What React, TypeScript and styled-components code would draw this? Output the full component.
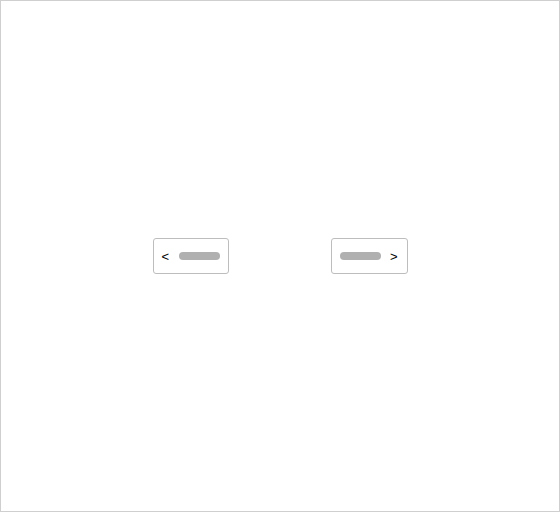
import React from "react";
import styled, { createGlobalStyle } from "styled-components";

const Global = createGlobalStyle`
  html, body { margin: 0; padding: 0; background: #fff; }
  body { font-family: "Liberation Sans", Arial, sans-serif; }
`;

const Page = styled.div`
  width: 560px;
  height: 512px;
  box-sizing: border-box;
  border: 1px solid #cfcfcf;
  display: flex;
  align-items: center;
  justify-content: center;
  gap: 102px;
`;

const Pager = styled.div<{ $next?: boolean }>`
  box-sizing: border-box;
  width: 76.5px;
  height: 36.5px;
  border: 1px solid #bdbdbd;
  border-radius: 3px;
  display: flex;
  align-items: center;
  justify-content: space-between;
  padding: ${(p) => (p.$next ? "0 9px 0 8px" : "0 8px 0 8px")};
  background: #fff;
`;

const Arrow = styled.span`
  font-size: 13px;
  line-height: 1;
  color: #000;
`;

const Bar = styled.span`
  display: block;
  width: 41px;
  height: 8px;
  border-radius: 4px;
  background: #b0b0b0;
`;

export default function App() {
  return (
    <>
      <Global />
      <Page>
        <Pager>
          <Arrow>&lt;</Arrow>
          <Bar />
        </Pager>
        <Pager $next>
          <Bar />
          <Arrow>&gt;</Arrow>
        </Pager>
      </Page>
    </>
  );
}
